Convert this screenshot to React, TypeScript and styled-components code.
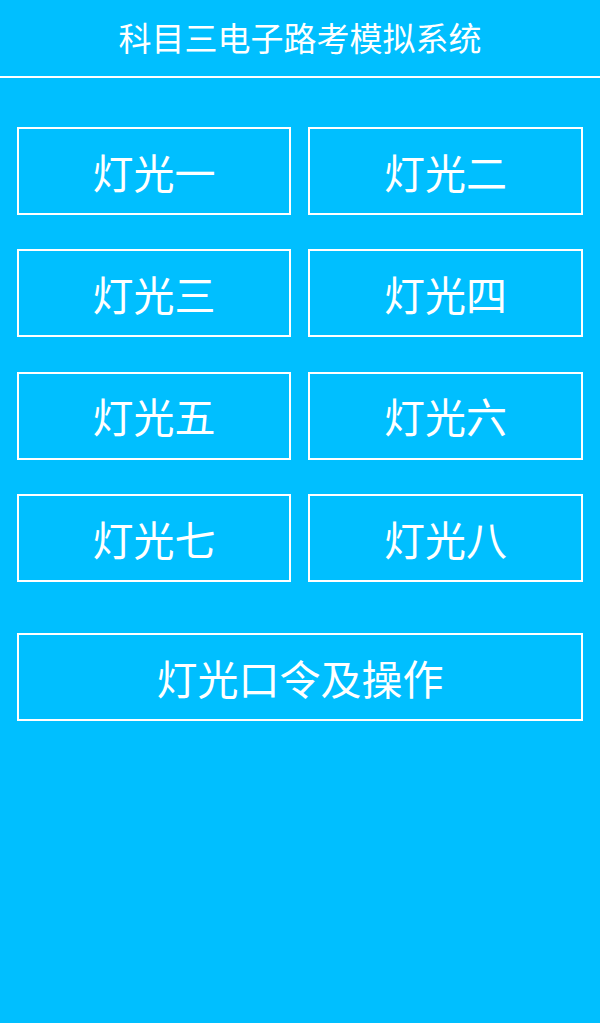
import React from "react";
import styled, { createGlobalStyle } from "styled-components";

const Global = createGlobalStyle`
  html, body {
    margin: 0;
    padding: 0;
    background: #00bfff;
  }
  body {
    font-family: "Noto Sans CJK SC", "Noto Sans", sans-serif;
  }
`;

const Page = styled.div`
  width: 600px;
  min-height: 1023px;
  background: #00bfff;
  color: #ffffff;
  display: flex;
  flex-direction: column;
`;

const Header = styled.header`
  height: 76px;
  border-bottom: 2px solid #ffffff;
  display: flex;
  align-items: center;
  justify-content: center;
`;

const Title = styled.h1`
  margin: 0;
  font-size: 33px;
  font-weight: 400;
  line-height: 1;
  padding-bottom: 2px;
`;

const Content = styled.main`
  padding: 49px 17px 0;
  display: flex;
  flex-direction: column;
  gap: 51px;
`;

const Grid = styled.div`
  display: grid;
  grid-template-columns: 274px 275px;
  column-gap: 17px;
  row-gap: 34.4px;
`;

const LightButton = styled.button`
  height: 88px;
  box-sizing: border-box;
  border: 2px solid #ffffff;
  background: transparent;
  color: #ffffff;
  font-family: "Noto Sans CJK SC", "Noto Sans", sans-serif;
  font-size: 41px;
  font-weight: 400;
  line-height: 1;
  padding: 0;
  display: flex;
  align-items: center;
  justify-content: center;
  cursor: pointer;
`;

const WideButton = styled(LightButton)`
  width: 566px;
`;

const lights = ["灯光一", "灯光二", "灯光三", "灯光四", "灯光五", "灯光六", "灯光七", "灯光八"];

export default function App() {
  return (
    <>
      <Global />
      <Page>
        <Header>
          <Title>科目三电子路考模拟系统</Title>
        </Header>
        <Content>
          <Grid>
            {lights.map((l) => (
              <LightButton key={l}>{l}</LightButton>
            ))}
          </Grid>
          <WideButton>灯光口令及操作</WideButton>
        </Content>
      </Page>
    </>
  );
}
